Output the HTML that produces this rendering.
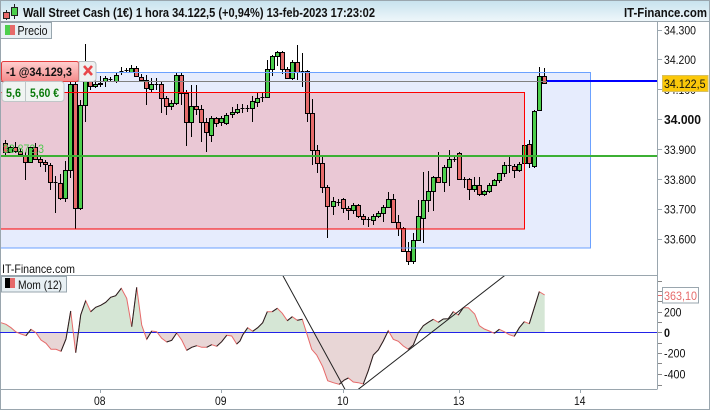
<!DOCTYPE html>
<html><head><meta charset="utf-8"><style>
html,body{margin:0;padding:0;background:#fff;width:710px;height:410px;overflow:hidden}
svg{display:block}
text{font-family:"Liberation Sans",sans-serif;font-size:12px;fill:#111}
</style></head><body>
<svg width="710" height="410" viewBox="0 0 710 410" xmlns="http://www.w3.org/2000/svg">
<defs>
<linearGradient id="h" x1="0" y1="0" x2="0" y2="1"><stop offset="0" stop-color="#c8e2ee"/><stop offset="1" stop-color="#eef6fa"/></linearGradient>
<linearGradient id="rb" x1="0" y1="0" x2="0" y2="1"><stop offset="0" stop-color="#ffd0d0"/><stop offset="1" stop-color="#f48a8a"/></linearGradient>
<clipPath id="plot"><rect x="1" y="22" width="656" height="253"/></clipPath>
<clipPath id="mom"><rect x="1" y="276" width="656" height="113"/></clipPath>
<clipPath id="up"><rect x="0" y="276" width="657" height="56.5"/></clipPath>
<clipPath id="dn"><rect x="0" y="332.5" width="657" height="57"/></clipPath>
</defs>
<rect x="0.5" y="0.5" width="709" height="409" fill="#fff" stroke="#9aa6ae"/>
<rect x="1" y="1" width="708" height="20" fill="url(#h)"/>
<path d="M0 21.5H710" stroke="#9aa6ae"/>
<!-- logo -->
<g shape-rendering="crispEdges">
<path d="M6.5 10V20M14.5 4V19" stroke="#222"/>
<rect x="3.5" y="12.5" width="6" height="6" fill="#e66a6a" stroke="#222"/>
<rect x="11.5" y="7.5" width="6" height="8" fill="#4ccf4c" stroke="#222"/>
</g>
<text x="23" y="17" style="font-weight:bold;font-size:12.5px" textLength="352" lengthAdjust="spacingAndGlyphs">Wall Street Cash (1€) 1 hora 34.122,5 (+0,94%) 13-feb-2023 17:23:02</text>
<text x="624" y="17" style="font-weight:bold;font-size:12.5px" textLength="83" lengthAdjust="spacingAndGlyphs">IT-Finance.com</text>
<g clip-path="url(#plot)">
<rect x="-5" y="72.5" width="595.5" height="175.5" fill="#e6ecfd"/>
<rect x="-5" y="92.5" width="529.5" height="136.5" fill="#eac8d5"/>
<g shape-rendering="crispEdges">
<path stroke="#000" fill="none" d="M5.5 140V155M10.5 145V153M15.5 142V153M20.5 148V156M25.5 152V180M30.5 147V162M35.5 143V159M40.5 155V167M45.5 160V172M50.5 163V190M55.5 176V213M60.5 174V200M65.5 161V202M70.5 80V178M75.5 80V229M80.5 100V210M85.5 44V122M90.5 78V90M95.5 80V88M100.5 76V87M105.5 76V87M110.5 77V82M116.5 72V83M121.5 67V75M126.5 68V72M131.5 65V72M136.5 66V76M141.5 74V80M146.5 75V105M151.5 78V92M156.5 78V90M161.5 82V113M166.5 96V115M171.5 100V110M176.5 72V105M181.5 72V105M186.5 90V146M191.5 85V137M196.5 85V115M201.5 105V142M206.5 118V152M211.5 116V142M216.5 117V127M221.5 116V126M226.5 113V125M232.5 107V118M237.5 104V114M242.5 104V113M247.5 105V112M252.5 96V122M257.5 93V107M262.5 93V102M267.5 60V97M272.5 55V76M277.5 51V66M282.5 51V74M287.5 67V79M292.5 60V80M297.5 45V80M302.5 53V87M307.5 70V122M312.5 99V165M317.5 145V173M322.5 157V193M327.5 185V238M333.5 197V215M338.5 199V206M343.5 198V213M348.5 206V220M353.5 203V214M358.5 204V218M363.5 214V225M368.5 217V227M373.5 214V225M378.5 211V218M383.5 205V222M388.5 192V208M393.5 194V223M398.5 215V236M403.5 227V251M408.5 242V265M413.5 233V264M418.5 200V240M423.5 172V243M428.5 171V212M433.5 176V211M438.5 152V183M444.5 165V192M449.5 150V186M454.5 155V162M459.5 152V180M464.5 177V188M469.5 178V200M474.5 177V192M479.5 177V196M484.5 190V196M489.5 183V193M494.5 179V186M499.5 173V183M504.5 162V177M509.5 157V173M514.5 164V178M519.5 162V172M524.5 145V164M529.5 140V168M534.5 110V168M539.5 67V110M544.5 68V84"/>
<path fill="#e66a6a" stroke="#000" d="M3.5 143.5h4v9h-4zM13.5 147.5h4v4h-4zM18.5 151.5h4v3h-4zM23.5 155.5h4v7h-4zM33.5 147.5h4v12h-4zM38.5 159.5h4v3h-4zM43.5 162.5h4v2h-4zM48.5 165.5h4v17h-4zM58.5 183.5h4v15h-4zM73.5 84.5h4v124h-4zM88.5 80.5h4v6h-4zM134.5 68.5h4v8h-4zM139.5 77.5h4v3h-4zM144.5 80.5h4v8h-4zM159.5 84.5h4v14h-4zM164.5 98.5h4v8h-4zM179.5 75.5h4v18h-4zM184.5 93.5h4v29h-4zM194.5 106.5h4v3h-4zM199.5 109.5h4v13h-4zM204.5 122.5h4v10h-4zM214.5 118.5h4v5h-4zM280.5 52.5h4v17h-4zM285.5 69.5h4v9h-4zM295.5 62.5h4v10h-4zM305.5 71.5h4v42h-4zM310.5 113.5h4v37h-4zM315.5 150.5h4v13h-4zM320.5 163.5h4v24h-4zM325.5 187.5h4v19h-4zM341.5 199.5h4v9h-4zM346.5 208.5h4v2h-4zM356.5 205.5h4v11h-4zM361.5 216.5h4v3h-4zM391.5 199.5h4v23h-4zM396.5 222.5h4v6h-4zM401.5 228.5h4v23h-4zM406.5 251.5h4v10h-4zM436.5 177.5h4v5h-4zM457.5 153.5h4v26h-4zM467.5 179.5h4v10h-4zM477.5 185.5h4v9h-4zM512.5 166.5h4v4h-4zM527.5 144.5h4v19h-4zM542.5 76.5h4v7h-4z"/>
<path fill="#4ccf4c" stroke="#000" d="M8.5 147.5h4v5h-4zM28.5 147.5h4v15h-4zM63.5 170.5h4v28h-4zM68.5 84.5h4v86h-4zM78.5 105.5h4v103h-4zM83.5 80.5h4v25h-4zM93.5 84.5h4v2h-4zM98.5 83.5h4v1h-4zM103.5 78.5h4v3h-4zM114.5 75.5h4v6h-4zM129.5 68.5h4v4h-4zM149.5 84.5h4v5h-4zM169.5 103.5h4v3h-4zM174.5 75.5h4v28h-4zM189.5 106.5h4v16h-4zM209.5 118.5h4v17h-4zM219.5 118.5h4v4h-4zM224.5 115.5h4v8h-4zM230.5 112.5h4v2h-4zM235.5 109.5h4v3h-4zM250.5 101.5h4v7h-4zM255.5 98.5h4v4h-4zM265.5 69.5h4v28h-4zM270.5 56.5h4v13h-4zM275.5 52.5h4v4h-4zM290.5 62.5h4v16h-4zM331.5 201.5h4v5h-4zM351.5 205.5h4v5h-4zM371.5 216.5h4v4h-4zM376.5 213.5h4v3h-4zM381.5 207.5h4v6h-4zM386.5 199.5h4v8h-4zM411.5 240.5h4v21h-4zM416.5 216.5h4v24h-4zM421.5 200.5h4v18h-4zM426.5 191.5h4v9h-4zM431.5 177.5h4v14h-4zM442.5 167.5h4v15h-4zM447.5 159.5h4v8h-4zM472.5 185.5h4v4h-4zM482.5 191.5h4v3h-4zM487.5 185.5h4v6h-4zM492.5 180.5h4v5h-4zM497.5 173.5h4v7h-4zM502.5 165.5h4v8h-4zM517.5 164.5h4v6h-4zM522.5 145.5h4v18h-4zM532.5 111.5h4v55h-4zM537.5 76.5h4v34h-4z"/>
<path stroke="#000" fill="none" d="M53.5 182.5h4M108.5 79.5h4M119.5 71.5h4M124.5 70.5h4M154.5 84.5h4M240.5 108.5h4M245.5 108.5h4M260.5 97.5h4M300.5 71.5h4M336.5 202.5h4M366.5 219.5h4M452.5 159.5h4M462.5 179.5h4M507.5 165.5h4"/>
<rect x="-5" y="72.5" width="595.5" height="175.5" fill="none" stroke="#6ba1ff"/>
<rect x="-5" y="92.5" width="529.5" height="136.5" fill="none" stroke="#f00"/>
<path d="M0 81.5H547" stroke="#808080"/>
<path d="M547 81H657" stroke="#00f" stroke-width="2"/>
<path d="M0 156H657" stroke="#3cb034" stroke-width="2"/>
<text x="3" y="153" style="font-size:12px;fill:#4fca4f" textLength="41" lengthAdjust="spacingAndGlyphs">33.872,3</text>
</g>
</g>
<!-- order box -->
<rect x="1.5" y="61.5" width="77" height="20" rx="2" fill="url(#rb)" stroke="#e23c3c"/>
<path d="M79 61.5h14a3 3 0 0 1 3 3v14a3 3 0 0 1-3 3h-14z" fill="#eef1f1" stroke="#b8bec0"/>
<path d="M84 66l8 9M92 66l-8 9" stroke="#e8474a" stroke-width="2.6"/>
<text x="6" y="76" style="font-weight:bold;font-size:12px" textLength="66" lengthAdjust="spacingAndGlyphs">-1 @34.129,3</text>
<rect x="2" y="81.5" width="62" height="20" rx="3" fill="#f0f4f2" stroke="#c0c6c8"/>
<path d="M25.5 82V101" stroke="#c0c6c8"/>
<text x="6" y="97" style="font-weight:bold;font-size:12px;fill:#0a7a0a" textLength="15" lengthAdjust="spacingAndGlyphs">5,6</text>
<text x="30" y="97" style="font-weight:bold;font-size:12px;fill:#0a7a0a" textLength="29" lengthAdjust="spacingAndGlyphs">5,60 €</text>
<!-- legend -->
<rect x="0.5" y="22.5" width="51" height="16" fill="#e8f0f4" stroke="#98a6ae"/>
<rect x="5" y="25" width="5" height="10" fill="#4ccf4c"/><rect x="10" y="25" width="5" height="10" fill="#e66a6a"/>
<text x="17.5" y="35" style="font-size:12.5px" textLength="30" lengthAdjust="spacingAndGlyphs">Precio</text>
<!-- frames -->
<g shape-rendering="crispEdges" stroke="#9aa6ae" fill="none">
<path d="M0.5 21V409M657.5 21V389.5M0 275.5H657M0 389.5H657"/>
<path d="M658 30.5h4M658 59.5h4M658 89.5h4M658 119.5h4M658 149.5h4M658 179.5h4M658 209.5h4M658 239.5h4"/>
<path d="M658 281.5h4M658 291.5h4M658 301.5h4M658 312.5h4M658 322.5h4M658 332.5h4M658 343.5h4M658 353.5h4M658 363.5h4M658 374.5h4M658 385.5h4" stroke="#888"/>
<path d="M100.5 389v4M221.5 389v4M343.5 389v4M459.5 389v4M580.5 389v4"/>
</g>
<!-- axis labels -->
<text x="664" y="34.5" textLength="32" lengthAdjust="spacingAndGlyphs">34.300</text>
<text x="664" y="64" textLength="32" lengthAdjust="spacingAndGlyphs">34.200</text>
<text x="664" y="94" textLength="32" lengthAdjust="spacingAndGlyphs">34.100</text>
<text x="664" y="124" textLength="37" lengthAdjust="spacingAndGlyphs" style="font-weight:bold;font-size:12.5px">34.000</text>
<text x="664" y="154" textLength="32" lengthAdjust="spacingAndGlyphs">33.900</text>
<text x="664" y="184" textLength="32" lengthAdjust="spacingAndGlyphs">33.800</text>
<text x="664" y="213.5" textLength="32" lengthAdjust="spacingAndGlyphs">33.700</text>
<text x="664" y="243.5" textLength="32" lengthAdjust="spacingAndGlyphs">33.600</text>
<rect x="662.5" y="75.5" width="45.5" height="16" fill="#fbc80a" stroke="#d8c060" shape-rendering="crispEdges"/>
<text x="664" y="88" textLength="41.5" lengthAdjust="spacingAndGlyphs">34.122,5</text>
<text x="2" y="273" textLength="73" lengthAdjust="spacingAndGlyphs">IT-Finance.com</text>
<!-- mom -->
<rect x="1.5" y="276.5" width="65" height="15.5" fill="#e8f0f4" stroke="#98a6ae" shape-rendering="crispEdges"/>
<rect x="5" y="278" width="5" height="10" fill="#000"/><rect x="10" y="278" width="5" height="10" fill="#e66a6a"/>
<text x="18" y="289" textLength="44" lengthAdjust="spacingAndGlyphs">Mom (12)</text>
<g clip-path="url(#up)"><path fill="#d5e6d5" d="M1 332.5V322.7L6 324.3 11 327.7 16 332 21 334 26 335.7 31 329.3 36 332.7 41 340 46 343.3 51 349.3 56 349.3 61 351.3 66 339 70.7 311 75.7 352.7 80.7 315 85.7 300.7 90.7 311.7 95.7 307.3 100.7 305.3 105.7 302.3 110.7 297.3 115.7 295.7 121.3 288.3 126.7 298.3 131.7 326.7 136.7 287.3 141.7 325 146.7 339.3 151.7 331 156.7 331.7 161.7 338.3 166.7 342 171.7 340.3 176.7 333 181.7 340 186.7 350.3 191.7 347.3 196.7 345.7 201.7 347.3 206.7 347.3 211.7 344.7 216.7 346.3 221.7 341.7 226.7 335.3 231.7 336 236.7 344 240 341 242.7 335 247.7 327.7 252.7 331.3 257.7 327.7 262.7 322.7 267.3 311.7 272.3 311.7 277.3 308.3 282.3 313.3 287.3 320.7 292.3 316.7 297.3 320.3 302.3 319.3 306.7 333.3 311.7 349.3 316.7 355 322.7 366.7 327.7 380.7 333.3 382.7 339.3 384.3 344.3 380 348.3 378 353.3 382 358.3 382.7 363.3 384 368.3 370.7 373.3 355 378.3 350 383.3 341 388.3 330.7 393.3 339.3 398.3 341.3 403.3 346 408.3 349.3 413.3 345 418.3 332.7 423.3 325.7 428.3 322.3 433.3 319.3 438.3 322.3 443.3 319 448.3 318.7 453.3 311.7 458.3 315 463.3 307.7 468.3 307.7 474.7 314 479.3 325.7 484.3 329 489.3 331 494.3 333.3 499.3 329.3 504.3 331.7 509.3 334.7 514.3 336.3 519.3 327.7 524.3 321.7 529.3 323.7 534.3 307.7 539.3 291.7 544.7 295V332.5z"/></g>
<g clip-path="url(#dn)"><path fill="#e8d6d6" d="M1 332.5V322.7L6 324.3 11 327.7 16 332 21 334 26 335.7 31 329.3 36 332.7 41 340 46 343.3 51 349.3 56 349.3 61 351.3 66 339 70.7 311 75.7 352.7 80.7 315 85.7 300.7 90.7 311.7 95.7 307.3 100.7 305.3 105.7 302.3 110.7 297.3 115.7 295.7 121.3 288.3 126.7 298.3 131.7 326.7 136.7 287.3 141.7 325 146.7 339.3 151.7 331 156.7 331.7 161.7 338.3 166.7 342 171.7 340.3 176.7 333 181.7 340 186.7 350.3 191.7 347.3 196.7 345.7 201.7 347.3 206.7 347.3 211.7 344.7 216.7 346.3 221.7 341.7 226.7 335.3 231.7 336 236.7 344 240 341 242.7 335 247.7 327.7 252.7 331.3 257.7 327.7 262.7 322.7 267.3 311.7 272.3 311.7 277.3 308.3 282.3 313.3 287.3 320.7 292.3 316.7 297.3 320.3 302.3 319.3 306.7 333.3 311.7 349.3 316.7 355 322.7 366.7 327.7 380.7 333.3 382.7 339.3 384.3 344.3 380 348.3 378 353.3 382 358.3 382.7 363.3 384 368.3 370.7 373.3 355 378.3 350 383.3 341 388.3 330.7 393.3 339.3 398.3 341.3 403.3 346 408.3 349.3 413.3 345 418.3 332.7 423.3 325.7 428.3 322.3 433.3 319.3 438.3 322.3 443.3 319 448.3 318.7 453.3 311.7 458.3 315 463.3 307.7 468.3 307.7 474.7 314 479.3 325.7 484.3 329 489.3 331 494.3 333.3 499.3 329.3 504.3 331.7 509.3 334.7 514.3 336.3 519.3 327.7 524.3 321.7 529.3 323.7 534.3 307.7 539.3 291.7 544.7 295V332.5z"/></g>
<path d="M0 332.5H657" stroke="#2222e8" shape-rendering="crispEdges"/>
<polyline fill="none" stroke="#e66a6a" points="1,322.7 6,324.3 11,327.7 16,332 21,334 26,335.7 31,329.3 36,332.7 41,340 46,343.3 51,349.3 56,349.3 61,351.3 66,339 70.7,311 75.7,352.7 80.7,315 85.7,300.7 90.7,311.7 95.7,307.3 100.7,305.3 105.7,302.3 110.7,297.3 115.7,295.7 121.3,288.3 126.7,298.3 131.7,326.7 136.7,287.3 141.7,325 146.7,339.3 151.7,331 156.7,331.7 161.7,338.3 166.7,342 171.7,340.3 176.7,333 181.7,340 186.7,350.3 191.7,347.3 196.7,345.7 201.7,347.3 206.7,347.3 211.7,344.7 216.7,346.3 221.7,341.7 226.7,335.3 231.7,336 236.7,344 240,341 242.7,335 247.7,327.7 252.7,331.3 257.7,327.7 262.7,322.7 267.3,311.7 272.3,311.7 277.3,308.3 282.3,313.3 287.3,320.7 292.3,316.7 297.3,320.3 302.3,319.3 306.7,333.3 311.7,349.3 316.7,355 322.7,366.7 327.7,380.7 333.3,382.7 339.3,384.3 344.3,380 348.3,378 353.3,382 358.3,382.7 363.3,384 368.3,370.7 373.3,355 378.3,350 383.3,341 388.3,330.7 393.3,339.3 398.3,341.3 403.3,346 408.3,349.3 413.3,345 418.3,332.7 423.3,325.7 428.3,322.3 433.3,319.3 438.3,322.3 443.3,319 448.3,318.7 453.3,311.7 458.3,315 463.3,307.7 468.3,307.7 474.7,314 479.3,325.7 484.3,329 489.3,331 494.3,333.3 499.3,329.3 504.3,331.7 509.3,334.7 514.3,336.3 519.3,327.7 524.3,321.7 529.3,323.7 534.3,307.7 539.3,291.7 544.7,295"/>
<path fill="none" stroke="#222" d="M26 335.7L31 329.3M61 351.3L66 339 70.7 311M75.7 352.7L80.7 315 85.7 300.7M90.7 311.7L95.7 307.3 100.7 305.3 105.7 302.3 110.7 297.3 115.7 295.7 121.3 288.3M131.7 326.7L136.7 287.3M146.7 339.3L151.7 331M166.7 342L171.7 340.3 176.7 333M186.7 350.3L191.7 347.3 196.7 345.7M206.7 347.3L211.7 344.7M216.7 346.3L221.7 341.7 226.7 335.3M236.7 344L240 341 242.7 335 247.7 327.7M252.7 331.3L257.7 327.7 262.7 322.7 267.3 311.7M272.3 311.7L277.3 308.3M287.3 320.7L292.3 316.7M297.3 320.3L302.3 319.3M339.3 384.3L344.3 380 348.3 378M363.3 384L368.3 370.7 373.3 355 378.3 350 383.3 341 388.3 330.7M408.3 349.3L413.3 345 418.3 332.7 423.3 325.7 428.3 322.3 433.3 319.3M438.3 322.3L443.3 319 448.3 318.7 453.3 311.7M458.3 315L463.3 307.7M494.3 333.3L499.3 329.3M514.3 336.3L519.3 327.7 524.3 321.7M529.3 323.7L534.3 307.7 539.3 291.7"/>
<g clip-path="url(#mom)"><path fill="none" stroke="#222" d="M282.7 275.3L345 389.3M358.3 389.3L505 275.3"/></g>
<text x="664" y="316.5" textLength="17.5" lengthAdjust="spacingAndGlyphs">200</text>
<text x="664" y="337" style="font-weight:bold" textLength="6" lengthAdjust="spacingAndGlyphs">0</text>
<text x="664" y="357.5" textLength="21.5" lengthAdjust="spacingAndGlyphs">-200</text>
<text x="664" y="378.5" textLength="21.5" lengthAdjust="spacingAndGlyphs">-400</text>
<path d="M658 295.5h4" stroke="#e66a6a" shape-rendering="crispEdges"/>
<rect x="662.5" y="287.5" width="36" height="15.5" fill="#fff" stroke="#9aa6ae" shape-rendering="crispEdges"/>
<text x="664" y="300" style="fill:#e66a6a" textLength="33" lengthAdjust="spacingAndGlyphs">363,10</text>
<text x="94" y="405" textLength="11.5" lengthAdjust="spacingAndGlyphs">08</text>
<text x="215" y="405" textLength="11.5" lengthAdjust="spacingAndGlyphs">09</text>
<text x="337" y="405" textLength="11.5" lengthAdjust="spacingAndGlyphs">10</text>
<text x="453" y="405" textLength="11.5" lengthAdjust="spacingAndGlyphs">13</text>
<text x="574" y="405" textLength="11.5" lengthAdjust="spacingAndGlyphs">14</text>
</svg>
</body></html>
